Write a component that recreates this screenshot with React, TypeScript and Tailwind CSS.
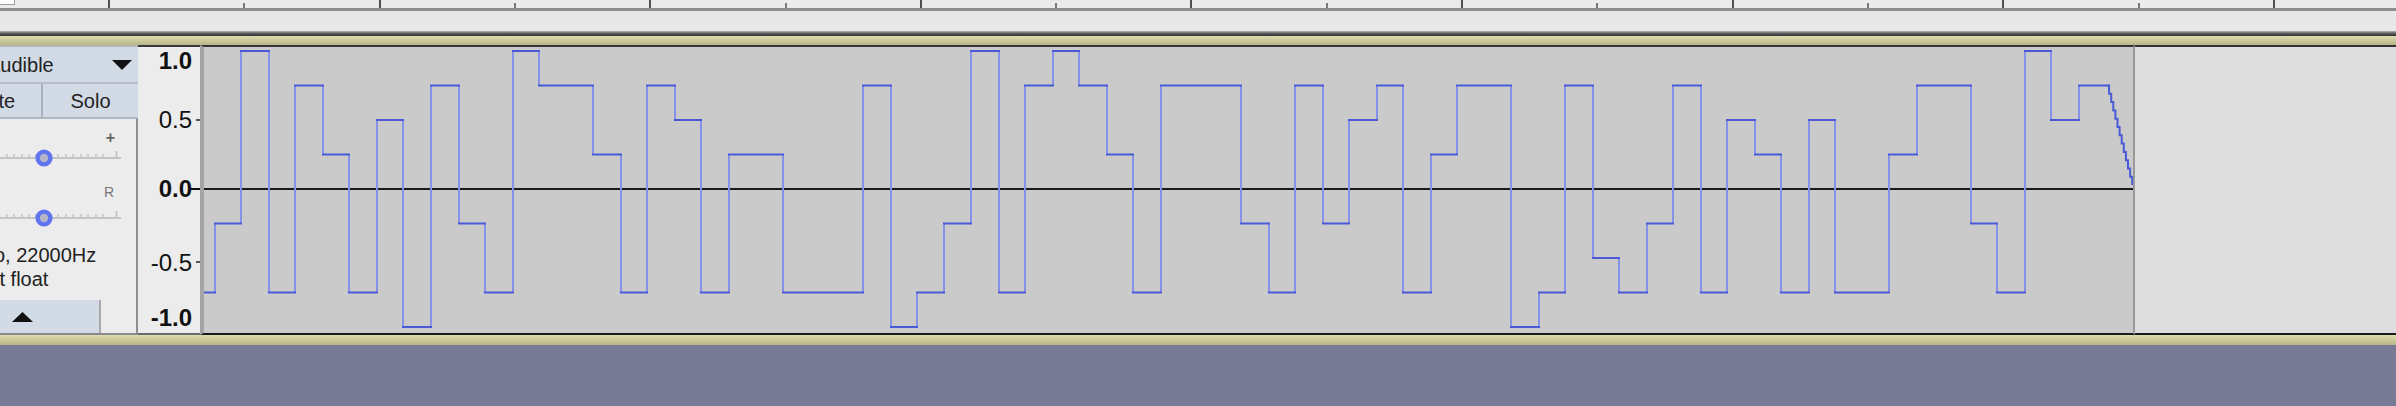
import React from "react";

const WAVE_LEFT = 204;
const ZERO_Y = 142;
const SCALE = 138;
const FADE_X = 2107;

// [x where the sample starts, level]
const steps: [number, number][] = [
  [204, -0.75], [215, -0.25], [241, 1], [269, -0.75], [295, 0.75], [323, 0.25],
  [349, -0.75], [377, 0.5], [403, -1], [431, 0.75], [459, -0.25], [485, -0.75],
  [513, 1], [539, 0.75], [593, 0.25], [621, -0.75], [647, 0.75], [675, 0.5],
  [701, -0.75], [729, 0.25], [783, -0.75], [863, 0.75], [891, -1], [917, -0.75],
  [944, -0.25], [971, 1], [999, -0.75], [1025, 0.75], [1053, 1], [1079, 0.75],
  [1107, 0.25], [1133, -0.75], [1161, 0.75], [1241, -0.25], [1269, -0.75], [1295, 0.75],
  [1323, -0.25], [1349, 0.5], [1377, 0.75], [1403, -0.75], [1431, 0.25], [1457, 0.75],
  [1511, -1], [1539, -0.75], [1565, 0.75], [1593, -0.5], [1619, -0.75], [1647, -0.25],
  [1673, 0.75], [1701, -0.75], [1727, 0.5], [1755, 0.25], [1781, -0.75], [1809, 0.5],
  [1835, -0.75], [1889, 0.25], [1917, 0.75], [1971, -0.25], [1997, -0.75], [2025, 1],
  [2051, 0.5], [2079, 0.75],
];

const levelY = (v: number) => ZERO_Y - SCALE * v;

function buildWave() {
  let h = "";
  let v = "";
  steps.forEach(([x, lvl], i) => {
    const next = steps[i + 1];
    const nextX = next ? next[0] : FADE_X;
    const y = levelY(lvl);
    h += `M${x - WAVE_LEFT} ${y}H${nextX - WAVE_LEFT}`;
    if (next) v += `M${nextX - WAVE_LEFT} ${y}V${levelY(next[1])}`;
  });
  // little staircase down at the end of the clip
  let fade = `M${FADE_X - WAVE_LEFT} ${levelY(0.75)}`;
  for (let i = 1; i <= 12; i++) {
    fade += `H${(FADE_X - WAVE_LEFT + i * 2.1).toFixed(1)}V${(levelY(0.75) + i * 8.3).toFixed(1)}`;
  }
  return { h, v, fade };
}

const wave = buildWave();

const majors = Array.from({ length: 9 }, (_, i) => Math.round(108 + i * 270.6));
const minors = Array.from({ length: 8 }, (_, i) => Math.round(243.3 + i * 270.6));

function Slider() {
  const ticks = [7, 14, 22, 29, 36, 51, 58, 66, 73, 81, 88, 96, 103];
  return (
    <svg width="136" height="24" className="block">
      <line x1="0" y1="12" x2="121" y2="12" stroke="#c4c4c4" strokeWidth="2" />
      {ticks.map((t) => (
        <line key={t} x1={t} y1="8" x2={t} y2="12" stroke="#c4c4c4" strokeWidth="1.5" />
      ))}
      <line x1="116.5" y1="5" x2="116.5" y2="12" stroke="#bdbdbd" strokeWidth="1.5" />
      <circle cx="44" cy="12" r="6.4" fill="#b4b6c8" stroke="#5f74f0" strokeWidth="4.4" />
    </svg>
  );
}

function AxisLabel({ top, text, bold }: { top: number; text: string; bold?: boolean }) {
  return (
    <div
      className={`absolute right-[8px] h-[24px] leading-[24px] text-[24px] text-[#111] ${bold ? "font-bold" : ""}`}
      style={{ top }}
    >
      {text}
    </div>
  );
}

export default function App() {
  return (
    <div className="w-[2396px] h-[406px] flex flex-col overflow-hidden bg-[#777b95] font-['Liberation_Sans',Arial,sans-serif]">
      {/* Time ruler */}
      <div className="relative h-[11px] shrink-0 bg-[#ebebeb] border-b-[3px] border-[#8e8e8e]">
        <svg width="2396" height="8" className="block">
          {majors.map((x) => (
            <rect key={x} x={x} y="0" width="2" height="8" fill="#505050" />
          ))}
          {minors.map((x) => (
            <rect key={x} x={x} y="3" width="2" height="5" fill="#7a7a7a" />
          ))}
        </svg>
        <div className="absolute top-0 left-0 w-[15px] h-[5px] bg-white border-r border-b border-[#a0a0a0]" />
      </div>
      <div className="h-[20px] shrink-0 bg-[#e8e8e8]" />
      <div className="h-[5px] shrink-0 bg-gradient-to-b from-[#b4b4b4] via-[#5a5a5a] to-[#2e2e2e]" />
      <div className="h-[9px] shrink-0 bg-gradient-to-b from-[#dedbb4] via-[#cbc899] to-[#b9b68b]" />

      {/* Track */}
      <div className="h-[290px] shrink-0 flex">
        {/* Track control panel */}
        <div className="w-[138px] shrink-0 flex flex-col border-t-2 border-t-[#b4b4b4] border-b-2 border-b-[#8a8a8a] text-[20px] text-[#222]">
          <div className="h-[37px] shrink-0 flex items-center overflow-hidden bg-[#d2dae6] border-b-2 border-[#b7bdca]">
            <span className="ml-[-13px] whitespace-nowrap leading-none">Audible</span>
            <svg width="20" height="10" className="ml-auto mr-[6px] shrink-0">
              <polygon points="0,0 20,0 10,10" fill="#111" />
            </svg>
          </div>
          <div className="h-[35px] shrink-0 flex overflow-hidden border-b-2 border-[#b0b7c4]">
            <div className="w-[98px] shrink-0 ml-[-55px] flex items-center justify-center bg-[#d2dae6] border-r-2 border-[#a9b0be]">
              Mute
            </div>
            <div className="flex-1 flex items-center justify-center bg-[#d2dae6]">Solo</div>
          </div>
          <div className="flex-1 flex flex-col overflow-hidden bg-[#ececec] border-r-2 border-[#8e8e8e]">
            <div className="h-[11px] shrink-0" />
            <div className="h-[16px] shrink-0 flex items-center justify-end pr-[21px] text-[16px] font-bold text-[#666]">+</div>
            <Slider />
            <div className="h-[14px] shrink-0" />
            <div className="h-[16px] shrink-0 flex items-center justify-end pr-[22px] text-[14px] text-[#777]">R</div>
            <div className="h-[6px] shrink-0" />
            <Slider />
            <div className="h-[13px] shrink-0" />
            <div className="h-[24px] shrink-0 ml-[-45px] whitespace-nowrap leading-[24px]">Mono, 22000Hz</div>
            <div className="h-[24px] shrink-0 ml-[-45px] whitespace-nowrap leading-[24px]">32-bit float</div>
            <div className="h-[9px] shrink-0" />
            <div className="h-[33px] w-[155px] shrink-0 ml-[-54px] flex items-center justify-center bg-[#d2dae6] border-r-2 border-[#a9a9a9]">
              <svg width="21" height="10">
                <polygon points="10.5,0 21,10 0,10" fill="#111" />
              </svg>
            </div>
          </div>
        </div>

        {/* Vertical ruler */}
        <div className="relative w-[62px] shrink-0 bg-[#ececec] border-t-2 border-t-[#3a3a3a] border-b-2 border-b-[#6a6a6a]">
          <AxisLabel top={2} text="1.0" bold />
          <AxisLabel top={61} text="0.5" />
          <AxisLabel top={130} text="0.0" bold />
          <AxisLabel top={204} text="-0.5" />
          <AxisLabel top={259} text="-1.0" bold />
          <div className="absolute right-0 top-[72px] w-[4px] h-[2px] bg-[#555]" />
          <div className="absolute right-0 top-[141px] w-[9px] h-[2px] bg-[#111]" />
          <div className="absolute right-0 top-[214px] w-[4px] h-[2px] bg-[#555]" />
        </div>

        {/* Waveform */}
        <div className="w-[1935px] shrink-0 bg-[#cacaca] border-l-4 border-l-[#a4a4a4] border-r-2 border-r-[#999] border-t-2 border-t-[#333] border-b-2 border-b-[#1a1a1a]">
          <svg width="1929" height="286" className="block">
            <line x1="0" y1={ZERO_Y} x2="1929" y2={ZERO_Y} stroke="#1a1a1a" strokeWidth="2" />
            <path d={wave.v} stroke="#8791e6" strokeWidth="2" fill="none" />
            <path d={wave.h} stroke="#4a5ad7" strokeWidth="2" strokeLinecap="square" fill="none" />
            <path d={wave.fade} stroke="#4a5ad7" strokeWidth="2" fill="none" />
          </svg>
        </div>

        <div className="flex-1 bg-[#dedede] border-t-2 border-t-[#333] border-b-2 border-b-[#1a1a1a]" />
      </div>

      <div className="h-[10px] shrink-0 bg-gradient-to-b from-[#dedbb4] via-[#cbc899] to-[#b9b68b]" />
      <div className="flex-1" />
    </div>
  );
}
